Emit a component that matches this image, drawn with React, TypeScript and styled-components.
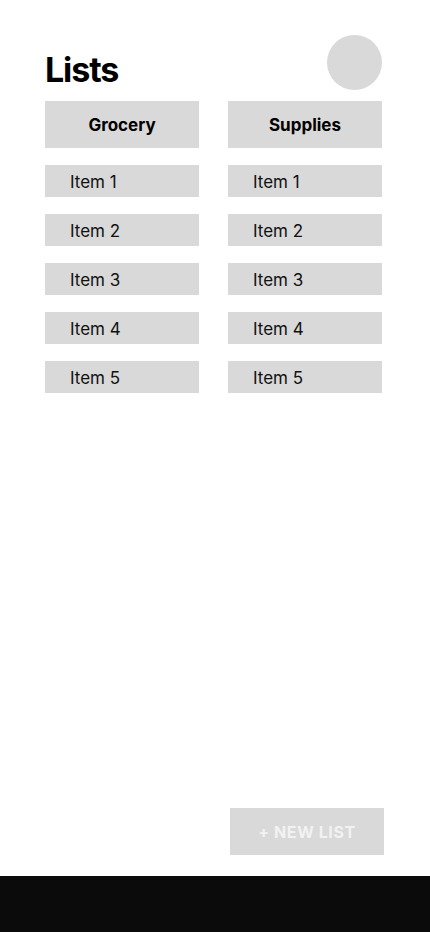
import React from "react";
import styled, { createGlobalStyle } from "styled-components";

const Global = createGlobalStyle`
  html, body { margin: 0; padding: 0; background: #fff; }
  body { font-family: Inter, "Noto Sans", sans-serif; }
`;

const Screen = styled.div`
  width: 430px;
  height: 932px;
  display: flex;
  flex-direction: column;
  background: #fff;
`;

const Main = styled.main`
  flex: 1;
  display: flex;
  flex-direction: column;
  padding: 35px 48px 21px 45px;
`;

const TopBar = styled.header`
  display: flex;
  justify-content: space-between;
  align-items: flex-end;
  height: 55px;
`;

const Title = styled.h1`
  margin: 0;
  font-size: 34px;
  font-weight: 700;
  line-height: 41px;
  color: #000;
  letter-spacing: -1.1px;
`;

const Avatar = styled.div`
  width: 55px;
  height: 55px;
  border-radius: 50%;
  background: #d9d9d9;
`;

const Columns = styled.div`
  display: grid;
  grid-template-columns: 154px 154px;
  column-gap: 29px;
  margin-top: 11px;
`;

const Column = styled.section`
  display: flex;
  flex-direction: column;
  gap: 17px;
`;

const ListHeader = styled.div`
  height: 47px;
  display: flex;
  align-items: center;
  justify-content: center;
  background: #d9d9d9;
  font-size: 17px;
  font-weight: 700;
  color: #000;
`;

const Item = styled.div`
  height: 32px;
  display: flex;
  align-items: center;
  padding-left: 25px;
  padding-top: 1px;
  box-sizing: border-box;
  background: #d9d9d9;
  font-size: 17px;
  font-weight: 400;
  color: #111;
`;

const Spacer = styled.div`
  flex: 1;
`;

const Actions = styled.div`
  display: flex;
  justify-content: flex-end;
  margin-right: -2px;
`;

const NewListButton = styled.button`
  width: 154px;
  height: 47px;
  border: none;
  background: #d9d9d9;
  color: #f2f2f2;
  font-family: Inter, "Noto Sans", sans-serif;
  font-size: 16px;
  font-weight: 700;
  letter-spacing: 0.6px;
  padding: 0;
  cursor: pointer;
`;

const BottomBar = styled.footer`
  height: 56px;
  background: #0b0b0b;
`;

const lists = ["Grocery", "Supplies"];
const items = ["Item 1", "Item 2", "Item 3", "Item 4", "Item 5"];

export default function App() {
  return (
    <>
      <Global />
      <Screen>
        <Main>
          <TopBar>
            <Title>Lists</Title>
            <Avatar />
          </TopBar>
          <Columns>
            {lists.map((l) => (
              <Column key={l}>
                <ListHeader>{l}</ListHeader>
                {items.map((i) => (
                  <Item key={i}>{i}</Item>
                ))}
              </Column>
            ))}
          </Columns>
          <Spacer />
          <Actions>
            <NewListButton>+ NEW LIST</NewListButton>
          </Actions>
        </Main>
        <BottomBar />
      </Screen>
    </>
  );
}
